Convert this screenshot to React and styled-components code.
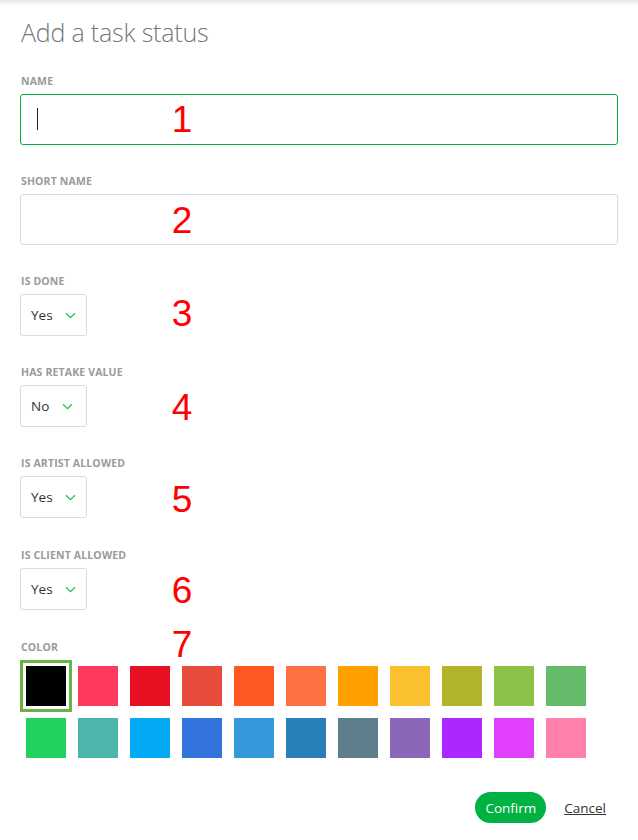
import React from "react";
import styled, { createGlobalStyle } from "styled-components";

const Global = createGlobalStyle`
  html, body { margin: 0; padding: 0; }
  body {
    background: linear-gradient(to bottom, #e4e4e4 0px, #f6f6f6 3px, #ffffff 6px);
    font-family: "Open Sans", "Noto Sans", sans-serif;
    color: #333;
    min-height: 840px;
  }
`;

const Page = styled.div`
  width: 638px;
  box-sizing: border-box;
  padding: 16px 20px 0 20px;
`;

const Title = styled.h2`
  margin: 0 0 0 1px;
  font-family: "Open Sans", "Noto Sans", sans-serif;
  font-weight: 300;
  font-size: 25px;
  line-height: 32px;
  color: #777;
  letter-spacing: -0.2px;
`;

const Form = styled.div`
  display: flex;
  flex-direction: column;
  gap: 29px;
  margin-top: 26px;
`;

const Field = styled.div`
  position: relative;
  display: flex;
  flex-direction: column;
  gap: 6px;
  margin-top: ${(p) => p.$offset || 0}px;
`;

const Label = styled.label`
  display: block;
  margin-left: 1px;
  font-family: "Open Sans", "Noto Sans", sans-serif;
  font-weight: 700;
  font-size: 10.5px;
  line-height: 14px;
  color: #9a9a9a;
  letter-spacing: 0.15px;
  text-transform: uppercase;
`;

const InputWrap = styled.div`
  position: relative;
`;

const TextInput = styled.input`
  display: block;
  box-sizing: border-box;
  width: 100%;
  height: 51px;
  padding: 0 16px;
  border: 1px solid ${(p) => (p.$focused ? "#00b242" : "#dbdbdb")};
  border-radius: 3px;
  font-family: "Open Sans", "Noto Sans", sans-serif;
  font-size: 14px;
  color: #333;
  outline: none;
  background: #fff;
`;

const Caret = styled.span`
  position: absolute;
  left: 17px;
  top: 14px;
  width: 1px;
  height: 22px;
  background: #222;
`;

const Select = styled.div`
  box-sizing: border-box;
  display: inline-flex;
  align-items: center;
  gap: 12px;
  width: 67px;
  height: 42px;
  padding: 0 0 0 10px;
  border: 1px solid #dbdbdb;
  border-radius: 3px;
  background: #fff;
  font-family: "Open Sans", "Noto Sans", sans-serif;
  font-size: 13.5px;
  color: #333;
`;

const SelectText = styled.span`
  min-width: 19px;
`;

const Marker = styled.span`
  position: absolute;
  left: 150px;
  top: ${(p) => p.$top}px;
  width: 24px;
  text-align: center;
  font-family: "Liberation Sans", Arial, sans-serif;
  font-size: 37px;
  line-height: 37px;
  color: #ff0000;
  pointer-events: none;
`;

const Swatches = styled.div`
  display: grid;
  grid-template-columns: repeat(11, 40px);
  gap: 12px;
  padding: 6px 0 0 6px;
`;

const Swatch = styled.div`
  width: 40px;
  height: 40px;
  background: ${(p) => p.$color};
  box-shadow: ${(p) =>
    p.$selected ? "0 0 0 3px #ffffff, 0 0 0 6px #67b346" : "none"};
`;

const Actions = styled.div`
  display: flex;
  justify-content: flex-end;
  align-items: center;
  gap: 18px;
  margin-top: 34px;
  padding-right: 12px;
`;

const Confirm = styled.button`
  height: 31px;
  padding: 0 10px;
  border: none;
  border-radius: 16px;
  background: #00b242;
  color: #fff;
  font-family: "Open Sans", "Noto Sans", sans-serif;
  font-size: 13.5px;
  cursor: pointer;
`;

const Cancel = styled.a`
  font-family: "Open Sans", "Noto Sans", sans-serif;
  font-size: 13.5px;
  color: #333;
  text-decoration: underline;
  cursor: pointer;
`;

const Chevron = () => (
  <svg width="11" height="7" viewBox="0 0 11 7" fill="none">
    <path d="M1 1.2 L5.5 5.6 L10 1.2" stroke="#22c35a" strokeWidth="1.3" />
  </svg>
);

const colors = [
  "#000000", "#ff3860", "#e81123", "#e74c3c", "#ff5722", "#ff7043",
  "#ffa000", "#fbc02d", "#afb42b", "#8bc34a", "#66bb6a",
  "#22d160", "#4db6ac", "#03a9f4", "#3273dc", "#3498db", "#2980b9",
  "#607d8b", "#8a67b8", "#ab26ff", "#e040fb", "#ff80ab",
];

const selects = [
  { label: "Is done", value: "Yes", marker: "3", top: 21, offset: 0 },
  { label: "Has retake value", value: "No", marker: "4", top: 24, offset: 0 },
  { label: "Is artist allowed", value: "Yes", marker: "5", top: 25, offset: 0 },
  { label: "Is client allowed", value: "Yes", marker: "6", top: 24, offset: 1 },
];

export default function App() {
  return (
    <>
      <Global />
      <Page>
        <Title>Add a task status</Title>
        <Form>
          <Field>
            <Label>Name</Label>
            <InputWrap>
              <TextInput $focused />
              <Caret />
            </InputWrap>
            <Marker $top={27}>1</Marker>
          </Field>
          <Field>
            <Label>Short name</Label>
            <TextInput />
            <Marker $top={28}>2</Marker>
          </Field>
          {selects.map((s) => (
            <Field key={s.label} $offset={s.offset}>
              <Label>{s.label}</Label>
              <Select>
                <SelectText>{s.value}</SelectText>
                <Chevron />
              </Select>
              <Marker $top={s.top}>{s.marker}</Marker>
            </Field>
          ))}
          <Field $offset={1}>
            <Label>Color</Label>
            <Swatches>
              {colors.map((c, i) => (
                <Swatch key={c} $color={c} $selected={i === 0} />
              ))}
            </Swatches>
            <Marker $top={-14}>7</Marker>
          </Field>
        </Form>
        <Actions>
          <Confirm>Confirm</Confirm>
          <Cancel>Cancel</Cancel>
        </Actions>
      </Page>
    </>
  );
}
